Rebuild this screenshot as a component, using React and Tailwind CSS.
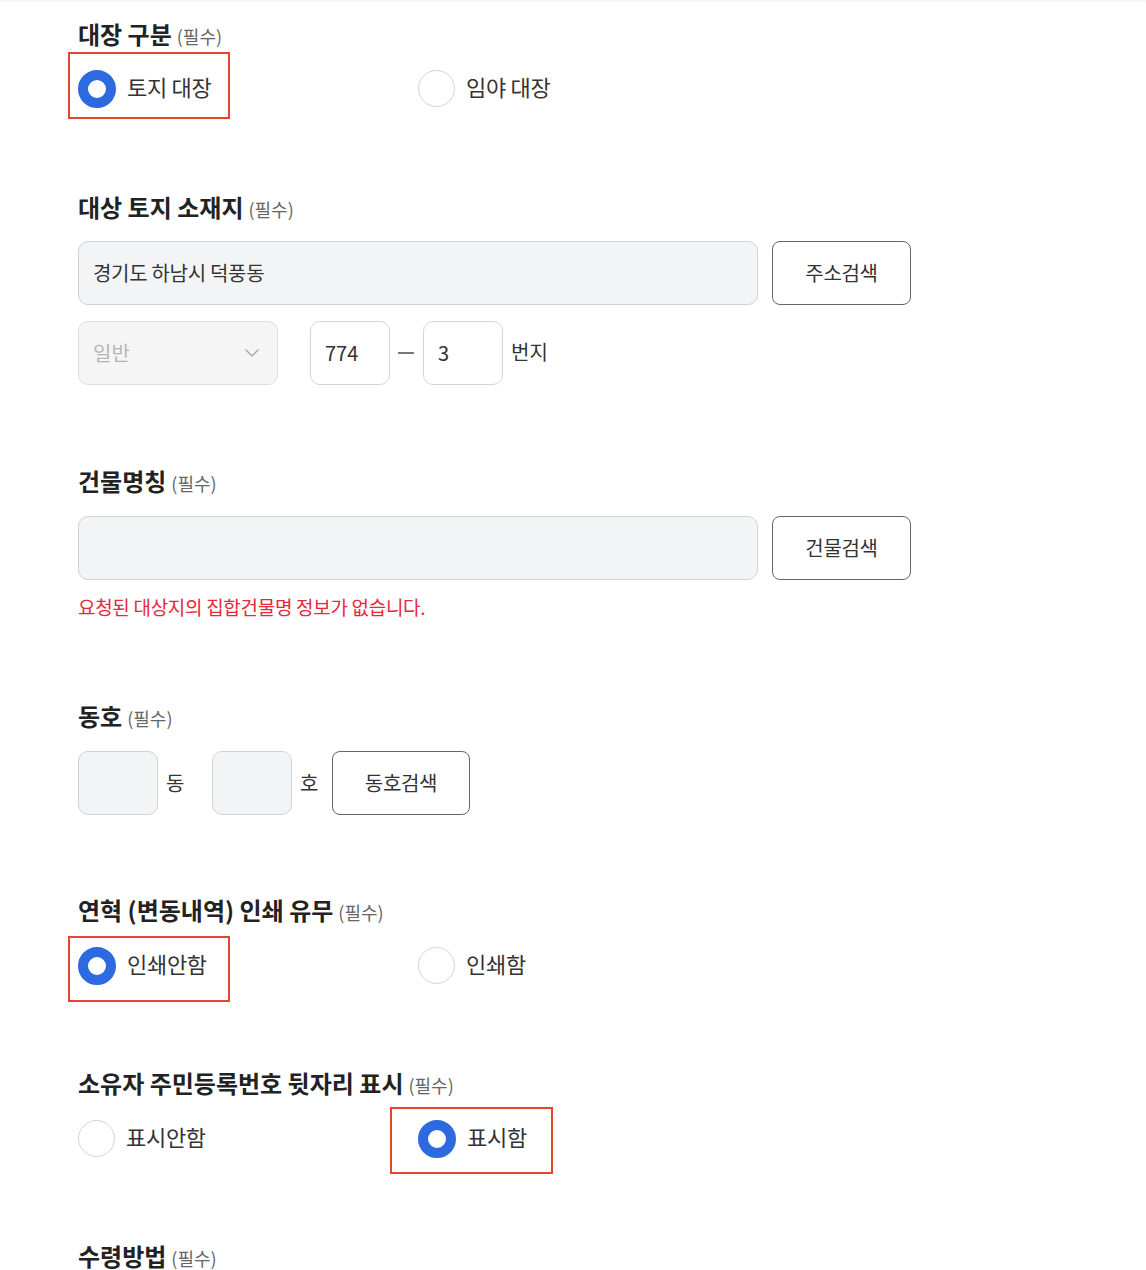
import React, { useState } from 'react';

const FONT = { fontFamily: '"Noto Sans CJK KR", "Noto Sans", sans-serif' };

function Heading({ children }) {
  return (
    <h2 className="flex items-baseline h-[32px] text-[24px] leading-[32px] font-bold text-[#222]">
      {children}
      <span className="ml-[5px] text-[18px] leading-none font-normal text-[#666]">(필수)</span>
    </h2>
  );
}

function Radio({ checked, label, onClick, mark }) {
  return (
    <button type="button" onClick={onClick} className="relative flex items-center h-[37px] text-left">
      {checked ? (
        <span className="w-[38px] h-[38px] rounded-full border-[10px] border-[#2d6ae0] bg-white shrink-0" />
      ) : (
        <span className="w-[37px] h-[37px] rounded-full border border-[#d4d4d4] bg-white shrink-0" />
      )}
      <span className="ml-[11px] pb-[5px] text-[22px] leading-[32px] text-[#333] tracking-[-0.3px]">{label}</span>
      {mark}
    </button>
  );
}

// 주석용 빨간 박스 (스크린샷 표시)
const markA = <span className="absolute left-[-10px] top-[-18px] w-[162px] h-[67px] border-2 border-[#e8432c] pointer-events-none" />;
const markB = <span className="absolute left-[-10px] top-[-11px] w-[162px] h-[66px] border-2 border-[#e8432c] pointer-events-none" />;
const markC = <span className="absolute left-[-28px] top-[-13px] w-[163px] h-[67px] border-2 border-[#e8432c] pointer-events-none" />;

function RadioGroup({ options, value, onChange, marks }) {
  return (
    <div className="flex">
      {options.map((opt, i) => (
        <div key={opt} className="w-[340px]">
          <Radio
            label={opt}
            checked={value === opt}
            onClick={() => onChange(opt)}
            mark={marks[i]}
          />
        </div>
      ))}
    </div>
  );
}

function OutlineButton({ children, className = '' }) {
  return (
    <button
      type="button"
      className={`h-[64px] rounded-[8px] border border-[#666] bg-white text-[20px] text-[#333] tracking-[-0.3px] ${className}`}
    >
      {children}
    </button>
  );
}

export default function App() {
  const [ledger, setLedger] = useState('토지 대장');
  const [history, setHistory] = useState('인쇄안함');
  const [showId, setShowId] = useState('표시함');

  return (
    <div
      style={FONT}
      className="min-h-[1270px] bg-white pl-[78px] pt-[18px] shadow-[inset_0_3px_3px_-2px_rgba(0,0,0,0.07)]"
    >
      {/* 대장 구분 */}
      <section>
        <Heading>대장 구분</Heading>
        <div className="mt-[20px]">
          <RadioGroup
            options={['토지 대장', '임야 대장']}
            value={ledger}
            onChange={setLedger}
            marks={[markA, null]}
          />
        </div>
      </section>

      {/* 대상 토지 소재지 */}
      <section className="mt-[84px]">
        <Heading>대상 토지 소재지</Heading>
        <div className="mt-[18px] flex gap-[14px]">
          <div className="w-[680px] h-[64px] rounded-[10px] border border-[#d2d2d2] bg-[#f3f4f6] flex items-center pl-[14px] text-[20px] text-[#333] tracking-[-0.3px]">
            경기도 하남시 덕풍동
          </div>
          <OutlineButton className="w-[139px]">주소검색</OutlineButton>
        </div>
        <div className="mt-[16px] flex items-center">
          <div className="w-[200px] h-[64px] rounded-[10px] border border-[#dedede] bg-[#f5f5f6] flex items-center justify-between pl-[14px] pr-[18px] text-[20px] text-[#b5b5b5]">
            <span>일반</span>
            <svg width="14" height="8" viewBox="0 0 14 8" fill="none">
              <path d="M1 1l6 6 6-6" stroke="#aaa" strokeWidth="1.5" strokeLinecap="round" strokeLinejoin="round" />
            </svg>
          </div>
          <div className="ml-[32px] w-[80px] h-[64px] rounded-[10px] border border-[#d5d5d5] bg-white flex items-center pl-[14px] text-[20px] text-[#333]">
            774
          </div>
          <span className="mx-[8px] w-[16px] h-[1.5px] bg-[#777]" />
          <div className="ml-[1px] w-[80px] h-[64px] rounded-[10px] border border-[#d5d5d5] bg-white flex items-center pl-[14px] text-[20px] text-[#333]">
            3
          </div>
          <span className="ml-[8px] -mt-[2px] text-[20px] text-[#333]">번지</span>
        </div>
      </section>

      {/* 건물명칭 */}
      <section className="mt-[80px]">
        <Heading>건물명칭</Heading>
        <div className="mt-[19px] flex gap-[14px]">
          <div className="w-[680px] h-[64px] rounded-[10px] border border-[#d2d2d2] bg-[#f3f4f6]" />
          <OutlineButton className="w-[139px]">건물검색</OutlineButton>
        </div>
        <p className="mt-[13px] text-[19px] leading-[28px] text-[#e5283a] tracking-[-0.3px]">
          요청된 대상지의 집합건물명 정보가 없습니다.
        </p>
      </section>

      {/* 동호 */}
      <section className="mt-[79px]">
        <Heading>동호</Heading>
        <div className="mt-[19px] flex items-center">
          <div className="w-[80px] h-[64px] rounded-[10px] border border-[#d2d2d2] bg-[#f3f4f6]" />
          <span className="ml-[8px] w-[20px] text-[20px] text-[#333]">동</span>
          <div className="ml-[26px] w-[80px] h-[64px] rounded-[10px] border border-[#d2d2d2] bg-[#f3f4f6]" />
          <span className="ml-[8px] w-[20px] text-[20px] text-[#333]">호</span>
          <OutlineButton className="ml-[12px] w-[138px]">동호검색</OutlineButton>
        </div>
      </section>

      {/* 연혁 인쇄 유무 */}
      <section className="mt-[79px]">
        <Heading>연혁 (변동내역) 인쇄 유무</Heading>
        <div className="mt-[21px]">
          <RadioGroup
            options={['인쇄안함', '인쇄함']}
            value={history}
            onChange={setHistory}
            marks={[markB, null]}
          />
        </div>
      </section>

      {/* 주민등록번호 뒷자리 */}
      <section className="mt-[83px]">
        <Heading>소유자 주민등록번호 뒷자리 표시</Heading>
        <div className="mt-[21px]">
          <RadioGroup
            options={['표시안함', '표시함']}
            value={showId}
            onChange={setShowId}
            marks={[null, markC]}
          />
        </div>
      </section>

      {/* 수령방법 */}
      <section className="mt-[83px] pb-10">
        <Heading>수령방법</Heading>
      </section>
    </div>
  );
}
